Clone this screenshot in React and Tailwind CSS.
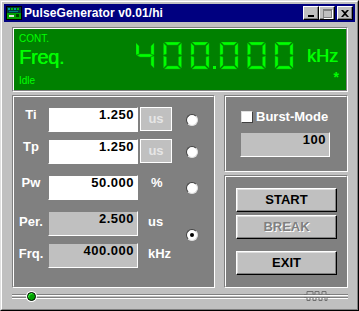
import React from "react";

const SEGS = {
  0: "abcdef",
  1: "bc",
  2: "abdeg",
  3: "abcdg",
  4: "bcfg",
  5: "acdfg",
  6: "acdefg",
  7: "abc",
  8: "abcdefg",
  9: "abcdfg",
};

// 7-segment cell, 18x27, segments 3px thick
const segPoints = {
  a: [[1, 0], [17, 0], [14, 3], [4, 3]],
  b: [[18, 1], [18, 13], [15, 12], [15, 4]],
  c: [[18, 14], [18, 26], [15, 23], [15, 15]],
  d: [[4, 24], [14, 24], [17, 27], [1, 27]],
  e: [[0, 14], [3, 15], [3, 23], [0, 26]],
  f: [[0, 1], [3, 4], [3, 12], [0, 13]],
  g: [[1, 13.5], [4, 12], [14, 12], [17, 13.5], [14, 15], [4, 15]],
};

const SevenSeg = ({ value }) => {
  let x = 0;
  const parts = [];
  value.split("").forEach((ch, i) => {
    if (ch === ".") {
      parts.push(<rect key={i} x={x - 5.5} y={24} width={3} height={3} fill="#00ff00" />);
      x += 1.5;
      return;
    }
    const on = SEGS[ch] || "";
    on.split("").forEach((s) => {
      parts.push(
        <polygon
          key={i + s}
          points={segPoints[s].map(([px, py]) => `${px + x},${py}`).join(" ")}
          fill="#00ff00"
          stroke="#00b400"
          strokeWidth="0.5"
        />
      );
    });
    x += 27.5;
  });
  return (
    <svg width="160" height="28" viewBox="0 0 160 28" aria-label={value}>
      {parts}
    </svg>
  );
};

const Frame = ({ className = "", inner = "", children }) => (
  <div className={`border border-t-[#808080] border-l-[#808080] border-r-white border-b-white ${className}`}>
    <div className={`w-full h-full border border-t-white border-l-white border-r-[#808080] border-b-[#808080] ${inner}`}>
      {children}
    </div>
  </div>
);

const Field = ({ value, white }) => (
  <div
    className={`w-[90px] h-[25px] border border-t-[#808080] border-l-[#808080] border-r-white border-b-white text-right pr-[3px] text-[13px] leading-[13px] font-bold tracking-[0.5px] text-black ${
      white ? "bg-white" : "bg-[#c0c0c0]"
    }`}
  >
    {value}
  </div>
);

const Radio = ({ checked, className = "" }) => (
  <div
    className={`w-[12px] h-[12px] rounded-full bg-white border border-t-[#404040] border-l-[#404040] border-r-[#dfdfdf] border-b-[#dfdfdf] flex items-center justify-center ${className}`}
  >
    {checked && <div className="w-[4px] h-[4px] rounded-full bg-black" />}
  </div>
);

const UnitBox = ({ text }) => (
  <div className="w-[32px] h-[24px] ml-[2px] self-start bg-[#c0c0c0] border border-white flex items-center justify-center text-[13px] font-bold text-[#e6e6e6]">
    {text}
  </div>
);

const Button = ({ children, disabled, className = "" }) => (
  <div
    className={`w-[101px] h-[24px] bg-[#c0c0c0] border border-t-white border-l-white border-r-black border-b-black shadow-[inset_-1px_-1px_#808080,inset_1px_1px_#dfdfdf] flex items-center justify-center text-[13px] font-bold ${
      disabled ? "text-[#808080] [text-shadow:1px_1px_0_#fff]" : "text-black"
    } ${className}`}
  >
    {children}
  </div>
);

const TitleBtn = ({ children, className = "" }) => (
  <div
    className={`w-[16px] h-[14px] bg-[#c0c0c0] border border-t-white border-l-white border-r-black border-b-black shadow-[inset_-1px_-1px_#808080] flex items-center justify-center ${className}`}
  >
    {children}
  </div>
);

const Label = ({ children, low }) => (
  <div className={`w-[34px] self-start text-center text-white text-[13px] leading-[13px] font-bold ${low ? "mt-[4px]" : "mt-[1px]"}`}>
    {children}
  </div>
);

export default function App() {
  return (
    <div className="w-[359px] h-[311px] bg-[#c0c0c0] border border-t-[#dfdfdf] border-l-[#dfdfdf] border-r-black border-b-black font-['Liberation_Sans',Arial,sans-serif] select-none">
      <div className="w-full h-full border border-t-white border-l-white border-r-[#808080] border-b-[#808080] p-[2px] flex flex-col">
        {/* title bar */}
        <div className="h-[18px] bg-[#000080] flex items-center pl-[2px] pr-[2px] shrink-0">
          <svg width="16" height="14" viewBox="0 0 16 14">
            <rect x="0" y="0" width="16" height="14" fill="#000" />
            <rect x="1" y="1" width="14" height="6" fill="#003838" />
            <rect x="2" y="2" width="2" height="2" fill="#00a0a0" />
            <rect x="5" y="2" width="2" height="2" fill="#00c000" />
            <rect x="8" y="2" width="2" height="2" fill="#00a0a0" />
            <rect x="11" y="2" width="2" height="2" fill="#00c000" />
            <rect x="3" y="5" width="9" height="1" fill="#008080" />
            <rect x="1" y="7" width="14" height="6" fill="#00a000" />
            <rect x="3" y="9" width="5" height="2" fill="#e0e0e0" />
            <rect x="10" y="8" width="3" height="3" fill="#004000" />
          </svg>
          <span className="ml-[2px] text-white text-[12px] font-bold leading-none tracking-[0.1px]">
            PulseGenerator v0.01/hi
          </span>
          <div className="ml-auto flex items-center">
            <TitleBtn>
              <div className="w-[6px] h-[2px] bg-black mt-[6px] mr-[1px]" />
            </TitleBtn>
            <TitleBtn>
              <div className="w-[9px] h-[9px] border border-t-2 border-[#808080] shadow-[1px_1px_0_#fff]" />
            </TitleBtn>
            <TitleBtn className="ml-[2px]">
              <svg width="8" height="7" viewBox="0 0 8 7">
                <path d="M0 0h2l2 2 2-2h2L5 3.5 8 7H6L4 5 2 7H0l3-3.5z" fill="#000" />
              </svg>
            </TitleBtn>
          </div>
        </div>

        <div className="flex flex-col pl-[8px]">
          {/* green display */}
          <Frame className="mt-[5px] w-[336px] h-[65px]" inner="bg-[#008000] flex border-r-[#008000] border-b-[#008000]">
            <div className="w-[122px] pl-[5px] flex flex-col text-[#00ff00]">
              <span className="mt-[4px] text-[10px] leading-[12px]">CONT.</span>
              <span className="mt-[2px] text-[20px] leading-[20px] tracking-[-0.3px] [text-shadow:0.4px_0_0_#00ff00]">Freq.</span>
              <span className="mt-[8px] text-[10px] leading-[12px]">Idle</span>
            </div>
            <div className="mt-[13px]">
              <SevenSeg value="400.000" />
            </div>
            <div className="ml-[11px] flex flex-col items-end text-[#00ff00]">
              <span className="mt-[17px] text-[18px] leading-[20px] [text-shadow:0.4px_0_0_#00ff00]">kHz</span>
              <span className="mt-[5px] -mr-[1px] text-[14px] leading-[12px] font-bold">*</span>
            </div>
          </Frame>

          <div className="mt-[3px] flex gap-[9px]">
            {/* parameters */}
            <Frame className="w-[203px] h-[193px]" inner="bg-[#808080] flex flex-col">
              <div className="mt-[10px] flex items-center h-[25px]">
                <Label>Ti</Label>
                <Field value="1.250" white />
                <UnitBox text="us" />
                <Radio className="ml-[14px]" />
              </div>
              <div className="mt-[7px] flex items-center h-[25px]">
                <Label>Tp</Label>
                <Field value="1.250" white />
                <UnitBox text="us" />
                <Radio className="ml-[14px]" />
              </div>
              <div className="mt-[11px] flex items-center h-[25px]">
                <Label>Pw</Label>
                <Field value="50.000" white />
                <div className="w-[32px] ml-[2px] self-start mt-[1px] pl-[11px] text-white text-[13px] leading-[13px] font-bold">%</div>
                <Radio className="ml-[14px]" />
              </div>
              <div className="mt-[11px] flex">
                <div className="flex flex-col gap-[7px]">
                  <div className="flex h-[25px]">
                    <Label low>Per.</Label>
                    <Field value="2.500" />
                    <div className="w-[32px] ml-[2px] mt-[4px] pl-[8px] text-white text-[13px] leading-[13px] font-bold">us</div>
                  </div>
                  <div className="flex h-[25px]">
                    <Label low>Frq.</Label>
                    <Field value="400.000" />
                    <div className="w-[32px] ml-[2px] mt-[4px] pl-[8px] text-white text-[13px] leading-[13px] font-bold">kHz</div>
                  </div>
                </div>
                <Radio checked className="ml-[14px] mt-[18px]" />
              </div>
            </Frame>

            <div className="flex flex-col gap-[3px]">
              {/* burst */}
              <Frame className="w-[124px] h-[77px]" inner="bg-[#808080] flex flex-col">
                <div className="mt-[13px] ml-[15px] flex items-center h-[13px]">
                  <div className="w-[12px] h-[12px] bg-white border border-t-[#dfdfdf] border-l-[#dfdfdf] border-r-[#404040] border-b-[#404040]" />
                  <span className="ml-[3px] text-white text-[13px] leading-[13px] font-bold">Burst-Mode</span>
                </div>
                <div className="mt-[9px] ml-[14px]">
                  <Field value="100" />
                </div>
              </Frame>
              {/* actions */}
              <Frame className="w-[124px] h-[113px]" inner="bg-[#808080] flex flex-col pl-[10px]">
                <Button className="mt-[11px]">START</Button>
                <Button className="mt-[3px]" disabled>BREAK</Button>
                <Button className="mt-[12px]">EXIT</Button>
              </Frame>
            </div>
          </div>

          {/* status strip */}
          <div className="relative w-[336px] h-[19px]">
            <div className="mt-[6px] h-[2px] border-t border-t-[#808080] border-b border-b-white" />
            <div className="mt-[1px] h-[2px] border-t border-t-[#808080] border-b border-b-white" />
            <div className="absolute left-[14px] top-[3px] w-[11px] h-[11px] rounded-full bg-white p-[1px]">
              <div className="w-full h-full rounded-full bg-[#00a000] border border-black shadow-[inset_1px_1px_1px_#40ff40]" />
            </div>
            <svg className="absolute left-[292px] top-[2px]" width="26" height="13" viewBox="0 0 26 13">
              <path d="M0 4.5H3V1.5H9V4.5H11V1.5H15V4.5H18V1.5H22V4.5H26" fill="none" stroke="#707070" strokeWidth="1" />
              <path d="M0 7.5H3V10.5H6V7.5H9V10.5H12V7.5H15V10.5H18V7.5H21V10.5H23V7.5H26" fill="none" stroke="#707070" strokeWidth="1" />
            </svg>
          </div>
        </div>
      </div>
    </div>
  );
}
